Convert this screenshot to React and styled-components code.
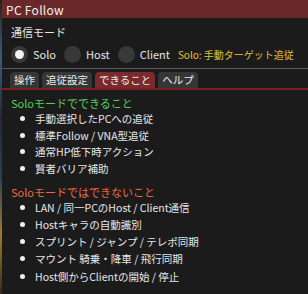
import React from "react";
import styled, { createGlobalStyle } from "styled-components";

const Global = createGlobalStyle`
  html, body { margin: 0; padding: 0; background: #1b1b1b; }
  body { width: 308px; height: 294px; overflow: hidden; font-family: "Noto Sans CJK JP", "Noto Sans", sans-serif; }
`;

const Frame = styled.div`
  display: flex;
  width: 308px;
  height: 294px;
`;

const Backdrop = styled.div`
  width: 2px;
  flex: none;
  background: linear-gradient(180deg, #2a2218 0%, #3b5a7a 20%, #1e2a3a 40%, #2c3e58 60%, #a07a30 80%, #3a2a18 100%);
`;

const Window = styled.div`
  flex: 1;
  display: flex;
  flex-direction: column;
  background: #1b1b1b;
  color: #e6e6e6;
`;

const TitleBar = styled.div`
  height: 18px;
  flex: none;
  background: #6a2828;
  display: flex;
  align-items: center;
  padding-left: 4px;
  font-size: 12px;
  color: #f2f2f2;
  letter-spacing: 0.3px;
`;

const Body = styled.div`
  display: flex;
  flex-direction: column;
  padding: 6px 0 0 9px;
`;

const Label = styled.div`
  font-size: 11px;
  line-height: 16px;
  color: #e6e6e6;
`;

const RadioRow = styled.div`
  display: flex;
  align-items: center;
  height: 20px;
  margin-top: 4px;
  font-size: 11px;
  white-space: nowrap;
`;

const Radio = styled.div`
  display: flex;
  align-items: center;
  margin-right: 8px;
  gap: 5px;
  flex: none;
`;

const Circle = styled.span`
  width: 17px;
  height: 17px;
  border-radius: 50%;
  background: #383838;
  display: flex;
  align-items: center;
  justify-content: center;
  &::after {
    content: "";
    display: ${(p) => (p.$on ? "block" : "none")};
    width: 9px;
    height: 9px;
    border-radius: 50%;
    background: #f4f4f4;
  }
`;

const Status = styled.span`
  color: #e2c03a;
  font-size: 10px;
  flex: none;
`;

const Separator = styled.div`
  height: 1px;
  background: #5a5a66;
  margin: 4px 0 3px -9px;
`;

const Tabs = styled.div`
  display: flex;
  gap: 3px;
  align-items: flex-end;
  height: 16px;
  border-bottom: 2px solid #7a1f1f;
  margin: 0 0 0 -9px;
  padding-left: 8px;
`;

const Tab = styled.div`
  height: 16px;
  padding: 0 4px;
  font-size: 10.5px;
  line-height: 16px;
  border-radius: 4px 4px 0 0;
  background: ${(p) => (p.$active ? "#7a2a2a" : "#363636")};
  color: #ececec;
`;

const Heading = styled.div`
  font-size: 11px;
  line-height: 14px;
  margin-top: ${(p) => p.$mt}px;
  color: ${(p) => p.$color};
`;

const List = styled.ul`
  list-style: none;
  margin: 0;
  padding: 0 0 0 9px;
  display: flex;
  flex-direction: column;
`;

const Item = styled.li`
  display: flex;
  align-items: center;
  font-size: 10.5px;
  height: ${(p) => p.$h}px;
  color: #e8e8e8;
  white-space: nowrap;
  &::before {
    content: "";
    width: 5px;
    height: 5px;
    border-radius: 50%;
    background: #f0f0f0;
    margin-right: 10px;
    flex: none;
  }
`;

const can = ["手動選択したPCへの追従", "標準Follow / VNA型追従", "通常HP低下時アクション", "賢者バリア補助"];
const cannot = [
  "LAN / 同一PCのHost / Client通信",
  "Hostキャラの自動識別",
  "スプリント / ジャンプ / テレポ同期",
  "マウント 騎乗・降車 / 飛行同期",
  "Host側からClientの開始 / 停止",
];

export default function App() {
  return (
    <>
      <Global />
      <Frame>
        <Backdrop />
        <Window>
          <TitleBar>PC Follow</TitleBar>
          <Body>
            <Label>通信モード</Label>
            <RadioRow>
              <Radio><Circle $on />Solo</Radio>
              <Radio><Circle />Host</Radio>
              <Radio><Circle />Client</Radio>
              <Status>Solo: 手動ターゲット追従</Status>
            </RadioRow>
            <Separator />
            <Tabs>
              <Tab>操作</Tab>
              <Tab>追従設定</Tab>
              <Tab $active>できること</Tab>
              <Tab>ヘルプ</Tab>
            </Tabs>
            <Heading $color="#52d05a" $mt={6}>Soloモードでできること</Heading>
            <List>
              {can.map((t) => <Item key={t} $h={16.7}>{t}</Item>)}
            </List>
            <Heading $color="#ec6a3c" $mt={8}>Soloモードではできないこと</Heading>
            <List>
              {cannot.map((t) => <Item key={t} $h={17.2}>{t}</Item>)}
            </List>
          </Body>
        </Window>
      </Frame>
    </>
  );
}
